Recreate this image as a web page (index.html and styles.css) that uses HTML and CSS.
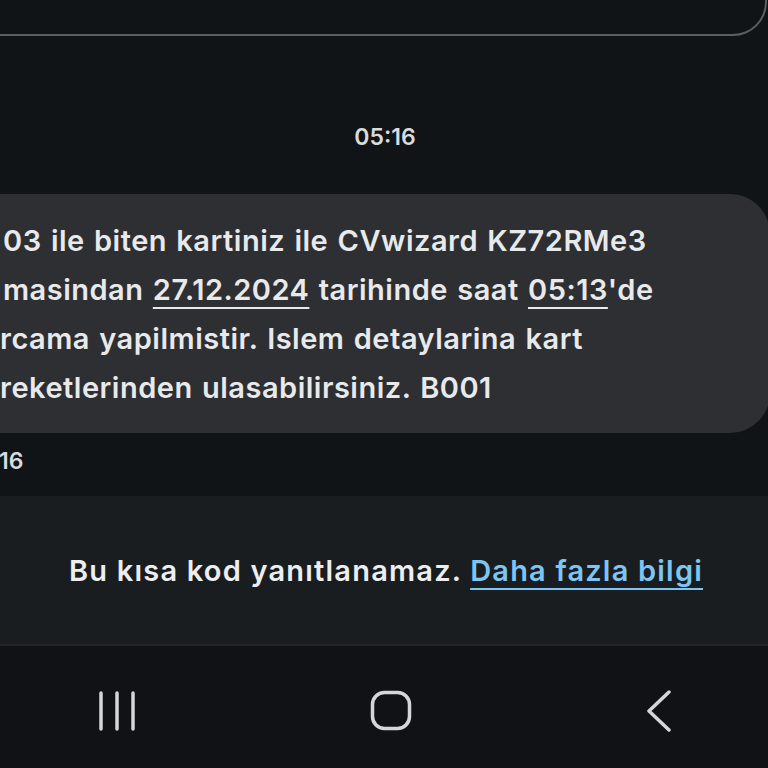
FILE: index.html
```html
<!DOCTYPE html>
<html lang="tr">
<head>
<meta charset="UTF-8">
<title>Mesajlar</title>
<link rel="stylesheet" href="styles.css">
</head>
<body>

<div class="screen">
  <div class="prevCard"></div>

  <div class="stamp">05:16</div>

  <div class="bubble">
    <p class="line">03 ile biten kartiniz ile CVwizard KZ72RMe3</p>
    <p class="line">masindan <u>27.12.2024</u> tarihinde saat <u>05:13</u>'de</p>
    <p class="line cut">rcama yapilmistir. Islem detaylarina kart</p>
    <p class="line cut">reketlerinden ulasabilirsiniz. B001</p>
  </div>

  <div class="msgTime">16</div>

  <div class="replyNote">
    <p>Bu kısa kod yanıtlanamaz. <a href="#">Daha fazla bilgi</a></p>
  </div>

  <div class="navBar">
    <svg class="navIcon" width="40" height="40" viewBox="0 0 40 40">
      <line x1="4" y1="2" x2="4" y2="38" />
      <line x1="20" y1="2" x2="20" y2="38" />
      <line x1="36" y1="2" x2="36" y2="38" />
    </svg>
    <svg class="navIcon" width="44" height="42" viewBox="0 0 44 42">
      <rect x="3.5" y="2.5" width="37" height="36" rx="12" ry="12" />
    </svg>
    <svg class="navIcon" width="28" height="42" viewBox="0 0 28 42">
      <polyline points="24,2 4,21 24,40" />
    </svg>
  </div>
</div>

</body>
</html>
```

FILE: styles.css
```css
* {
  box-sizing: border-box;
  padding: 0px;
  margin: 0px;
}

body {
  background-color: #111417;
  overflow: hidden;
  font-family: Inter, "Noto Sans", sans-serif;
  color: #e6e7e9;
}

.screen {
  width: 768px;
  height: 768px;
  display: flex;
  flex-direction: column;
}

.prevCard {
  height: 38px;
  margin-top: -2px;
  margin-right: 1px;
  border-right: 2px solid #5a5e62;
  border-bottom: 2px solid #5a5e62;
  border-bottom-right-radius: 34px;
}

.stamp {
  margin-top: 88px;
  text-align: center;
  font-size: 23px;
  font-weight: 600;
  line-height: 26px;
  color: #d9dbdd;
  padding-left: 2px;
}

.bubble {
  margin-top: 44px;
  margin-right: -2px;
  height: 239px;
  padding: 22px 0px 0px 3px;
  background-color: #2d2f32;
  border-top-right-radius: 40px;
  border-bottom-right-radius: 40px;
}

.line {
  font-size: 29px;
  font-weight: 600;
  letter-spacing: 0.5px;
  word-spacing: 1.5px;
  line-height: 49px;
  white-space: nowrap;
  color: #e8e9eb;
}

.line u {
  text-decoration-thickness: 2px;
  text-underline-offset: 7px;
}

.cut {
  margin-left: -3px;
}

.msgTime {
  margin-top: 15px;
  height: 48px;
  font-size: 23px;
  font-weight: 600;
  line-height: 26px;
  color: #d9dbdd;
  margin-left: -1px;
}

.replyNote {
  height: 150px;
  background-color: #1a1d20;
  display: flex;
  justify-content: center;
  align-items: center;
  border-bottom: 2px solid #222427;
}

.replyNote p {
  font-size: 29px;
  font-weight: 600;
  letter-spacing: 1.2px;
  color: #eceef0;
  padding-left: 4px;
  white-space: nowrap;
}

.replyNote a {
  color: #7dc6f3;
  text-decoration-thickness: 2px;
  text-underline-offset: 7px;
}

.navBar {
  flex: 1;
  background-color: #111216;
  display: flex;
  justify-content: space-between;
  align-items: center;
  padding: 8px 95px 0px 97px;
}

.navIcon line,
.navIcon rect,
.navIcon polyline {
  fill: none;
  stroke: #d4d6d8;
  stroke-width: 3.5;
  stroke-linecap: round;
  stroke-linejoin: round;
}
```
